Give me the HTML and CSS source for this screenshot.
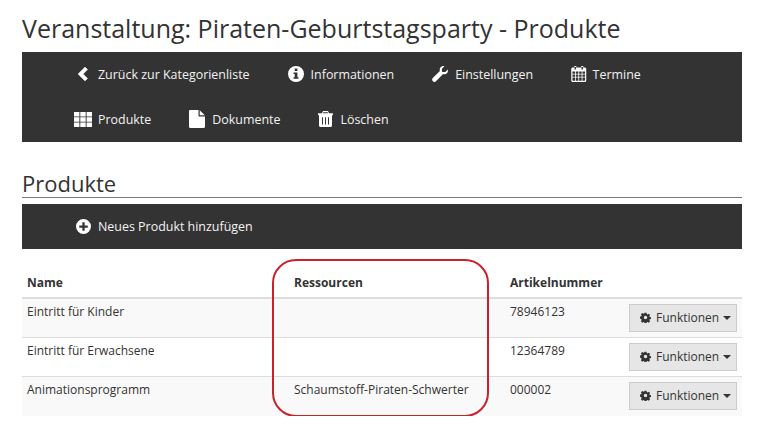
FILE: index.html
```html
<!DOCTYPE html>
<html lang="de">
<head>
<meta charset="utf-8">
<title>Veranstaltung: Piraten-Geburtstagsparty - Produkte</title>
<link rel="stylesheet" href="styles.css">
</head>
<body>
<svg class="defs" width="0" height="0" aria-hidden="true">
  <symbol id="gear" viewBox="0 0 16 16"><path fill-rule="evenodd" d="M6.600 1h2.800l.4 2 1.100.5 1.800-1.100 2 2-1.100 1.800.5 1.100 1.900.4v2.600l-1.900.4-.5 1.100 1.100 1.800-2 2-1.800-1.100-1.100.5-.4 1.900H6.600l-.4-1.900-1.100-.5-1.800 1.100-2-2 1.100-1.800-.5-1.100L0 9.300V6.700l1.900-.4.5-1.100-1.100-1.800 2-2 1.800 1.100 1.100-.5zM8 5.500a2.500 2.500 0 1 0 0 5 2.500 2.500 0 0 0 0-5z"/></symbol>
</svg>
<main class="page">
  <h1 class="title">Veranstaltung: Piraten-Geburtstagsparty - Produkte</h1>
  <nav class="bar bar-nav">
    <div class="row">
      <a class="item"><svg class="ic ic-back" viewBox="0 0 17 16"><path d="M11 1 4 8l7 7 2.600-2.600L9.200 8l4.400-4.400z" stroke="#fff" stroke-width=".4" stroke-linejoin="round"/></svg>Zurück zur Kategorienliste</a>
      <a class="item"><svg class="ic" viewBox="0 0 16 16"><path fill-rule="evenodd" d="M8 0a8 8 0 1 1 0 16A8 8 0 0 1 8 0zM6.700 2.600v2.300h2.700V2.600zM5.500 6.400v1.500h1.200v3.300H5.500v1.600h5v-1.600H9.400V6.400z"/></svg>Informationen</a>
      <a class="item"><svg class="ic" viewBox="0 0 16 16"><path d="M15.800 3.600c.2.700.2 1.700-.2 2.600-.8 1.700-2.700 2.500-4.500 1.900L4 15.200c-.9.900-2.300.9-3.200 0-.9-.9-.9-2.300 0-3.200L7.900 4.900C7.300 3.100 8.100 1.200 9.800.4c.9-.4 1.900-.4 2.600-.2L9.900 2.700v2.800l.6.600h2.800z"/></svg>Einstellungen</a>
      <a class="item"><svg class="ic ic-cal" viewBox="0 0 15 16"><path fill-rule="evenodd" d="M3 0h2v1.500h5V0h2v1.500h1.500c.8 0 1.500.7 1.500 1.500v11.500c0 .8-.7 1.500-1.500 1.500h-12C.7 16 0 15.300 0 14.500V3c0-.8.7-1.500 1.500-1.500H3zM1.200 5.600v2.200h2.600V5.600zm3.400 0v2.200h2.500V5.600zm3.300 0v2.200h2.500V5.600zm3.300 0v2.200h2.600V5.600zM1.200 8.600v2.200h2.600V8.600zm3.400 0v2.200h2.500V8.600zm3.300 0v2.200h2.500V8.600zm3.300 0v2.200h2.600V8.600zM1.200 11.600v2.300c0 .4.200.9.600.9h2V11.600zm3.400 0v3.200h2.500v-3.200zm3.300 0v3.200h2.500v-3.200zm3.300 0v3.200h2c.4 0 .6-.5.6-.9v-2.300zM3.300 1v2.500h1.400V1zm7 0v2.500h1.400V1z"/></svg>Termine</a>
    </div>
    <div class="row">
      <a class="item"><svg class="ic ic-grid" viewBox="0 0 18 15"><path d="M0 0h5.400v4.400H0zM6.300 0h5.400v4.400H6.300zM12.600 0H18v4.400h-5.400zM0 5.300h5.400v4.400H0zM6.300 5.300h5.400v4.400H6.300zM12.600 5.300H18v4.400h-5.400zM0 10.600h5.400V15H0zM6.300 10.600h5.400V15H6.300zM12.600 10.600H18V15h-5.400z"/></svg>Produkte</a>
      <a class="item"><svg class="ic ic-file" viewBox="0 0 16 18"><path d="M1 0h8.500v5.500c0 .6.400 1 1 1H16v10.300c0 .7-.5 1.200-1.200 1.200H1.200C.5 18 0 17.500 0 16.800V1.200C0 .5.500 0 1.200 0zM10.700.2 15.800 5.300h-5.100z"/></svg>Dokumente</a>
      <a class="item"><svg class="ic ic-trash" viewBox="0 0 15 16"><path fill-rule="evenodd" d="M5 0h5l1 2.200h3.500c.3 0 .5.200.5.500v1c0 .3-.2.500-.5.500H14v10c0 1-.7 1.800-1.500 1.800h-10C1.700 16 1 15.200 1 14.200v-10H.5c-.3 0-.5-.2-.5-.5v-1c0-.3.200-.5.500-.5H4zM5.300 1.200 4.900 2.200h5.200l-.4-1zM4 6.200v7.300h1V6.200zm3 0v7.300h1V6.200zm3 0v7.300h1V6.200z"/></svg>Löschen</a>
    </div>
  </nav>
  <h2 class="heading">Produkte</h2>
  <div class="bar bar-add">
    <a class="item"><svg class="ic ic-plus" viewBox="0 0 16 16"><path fill-rule="evenodd" d="M8 0a8 8 0 1 1 0 16A8 8 0 0 1 8 0zM6.800 3.500v3.300H3.500v2.400h3.300v3.300h2.400V9.200h3.300V6.800H9.200V3.500z"/></svg>Neues Produkt hinzufügen</a>
  </div>
  <div class="table-wrap">
    <table class="table">
      <colgroup><col class="c-name"><col class="c-res"><col class="c-art"><col></colgroup>
      <thead>
        <tr><th>Name</th><th>Ressourcen</th><th>Artikelnummer</th><th></th></tr>
      </thead>
      <tbody>
        <tr><td>Eintritt für Kinder</td><td></td><td>78946123</td><td class="act"><button class="btn" type="button"><svg class="gear"><use href="#gear"/></svg>Funktionen<span class="caret"></span></button></td></tr>
        <tr><td>Eintritt für Erwachsene</td><td></td><td>12364789</td><td class="act"><button class="btn" type="button"><svg class="gear"><use href="#gear"/></svg>Funktionen<span class="caret"></span></button></td></tr>
        <tr><td>Animationsprogramm</td><td>Schaumstoff-Piraten-Schwerter</td><td>000002</td><td class="act"><button class="btn" type="button"><svg class="gear"><use href="#gear"/></svg>Funktionen<span class="caret"></span></button></td></tr>
      </tbody>
    </table>
    <div class="highlight"></div>
  </div>
</main>
</body>
</html>
```
FILE: styles.css
```css
* { box-sizing: border-box; }
html, body { margin: 0; padding: 0; background: #fff; }
body { font-family: "Open Sans", sans-serif; color: #333; overflow: hidden; }
.defs { position: absolute; }
.page { width: 720px; margin-left: 22px; padding-top: 11px; }
.title { margin: 0 0 7px; font-size: 25px; font-weight: 400; line-height: 34px; height: 34px; color: #333; }
.bar { background: #333; color: #fff; padding-left: 52px; }
.bar-nav { height: 90px; }
.row { display: flex; gap: 38px; height: 45px; }
.item { display: flex; align-items: center; height: 44px; font-size: 12.45px; color: #f2f2f2; white-space: nowrap; }
.ic { width: 16px; height: 16px; margin-right: 7px; fill: #fff; flex: none; }
.ic-back { width: 17px; margin-right: 7px; }
.ic-cal { width: 15.5px; margin-right: 6px; }
.ic-grid { width: 18px; height: 15px; margin-right: 6px; }
.ic-file { width: 16px; height: 18px; }
.ic-trash { width: 15px; }
.ic-plus { margin-left: 2px; margin-right: 7px; width: 15px; height: 15px; }
.bar-nav + .heading { margin-top: 28px; }
.heading { margin: 0 0 6px; font-size: 22px; font-weight: 400; line-height: 27px; height: 28px; border-bottom: 1px solid #777; color: #333; }
.bar-add { height: 45px; }
.table-wrap { position: relative; margin-top: 18px; }
.table { width: 100%; border-collapse: collapse; table-layout: fixed; font-size: 12px; color: #333; }
.c-name { width: 267px; }
.c-res { width: 216px; }
.c-art { width: 119px; }
.table th { text-align: left; font-weight: 700; height: 30px; padding: 7px 5px 6px; border-bottom: 2px solid #ddd; line-height: 17px; }
.table td { padding: 4px 5px 6px; vertical-align: top; border-top: 1px solid #ddd; line-height: 17px; height: 39px; }
.table td.act { padding: 5px; text-align: right; }
.table tbody tr:first-child td { border-top: 0; height: 38px; }
.table tbody tr:nth-child(odd) { background: #f9f9f9; }
.btn { display: inline-flex; align-items: center; width: 108px; height: 28px; padding: 0 0 1px 10px; font: inherit; font-size: 12px; color: #333; background: #e6e6e6; border: 1px solid #ccc; white-space: nowrap; }
.gear { width: 11px; height: 11px; margin-right: 5px; fill: #333; }
.caret { width: 0; height: 0; margin-left: 4px; border-left: 4px solid transparent; border-right: 4px solid transparent; border-top: 4px solid #333; }
.highlight { position: absolute; left: 250px; top: -8px; width: 217px; height: 158px; border: 2px solid #c8232c; border-radius: 24px; pointer-events: none; }
```
